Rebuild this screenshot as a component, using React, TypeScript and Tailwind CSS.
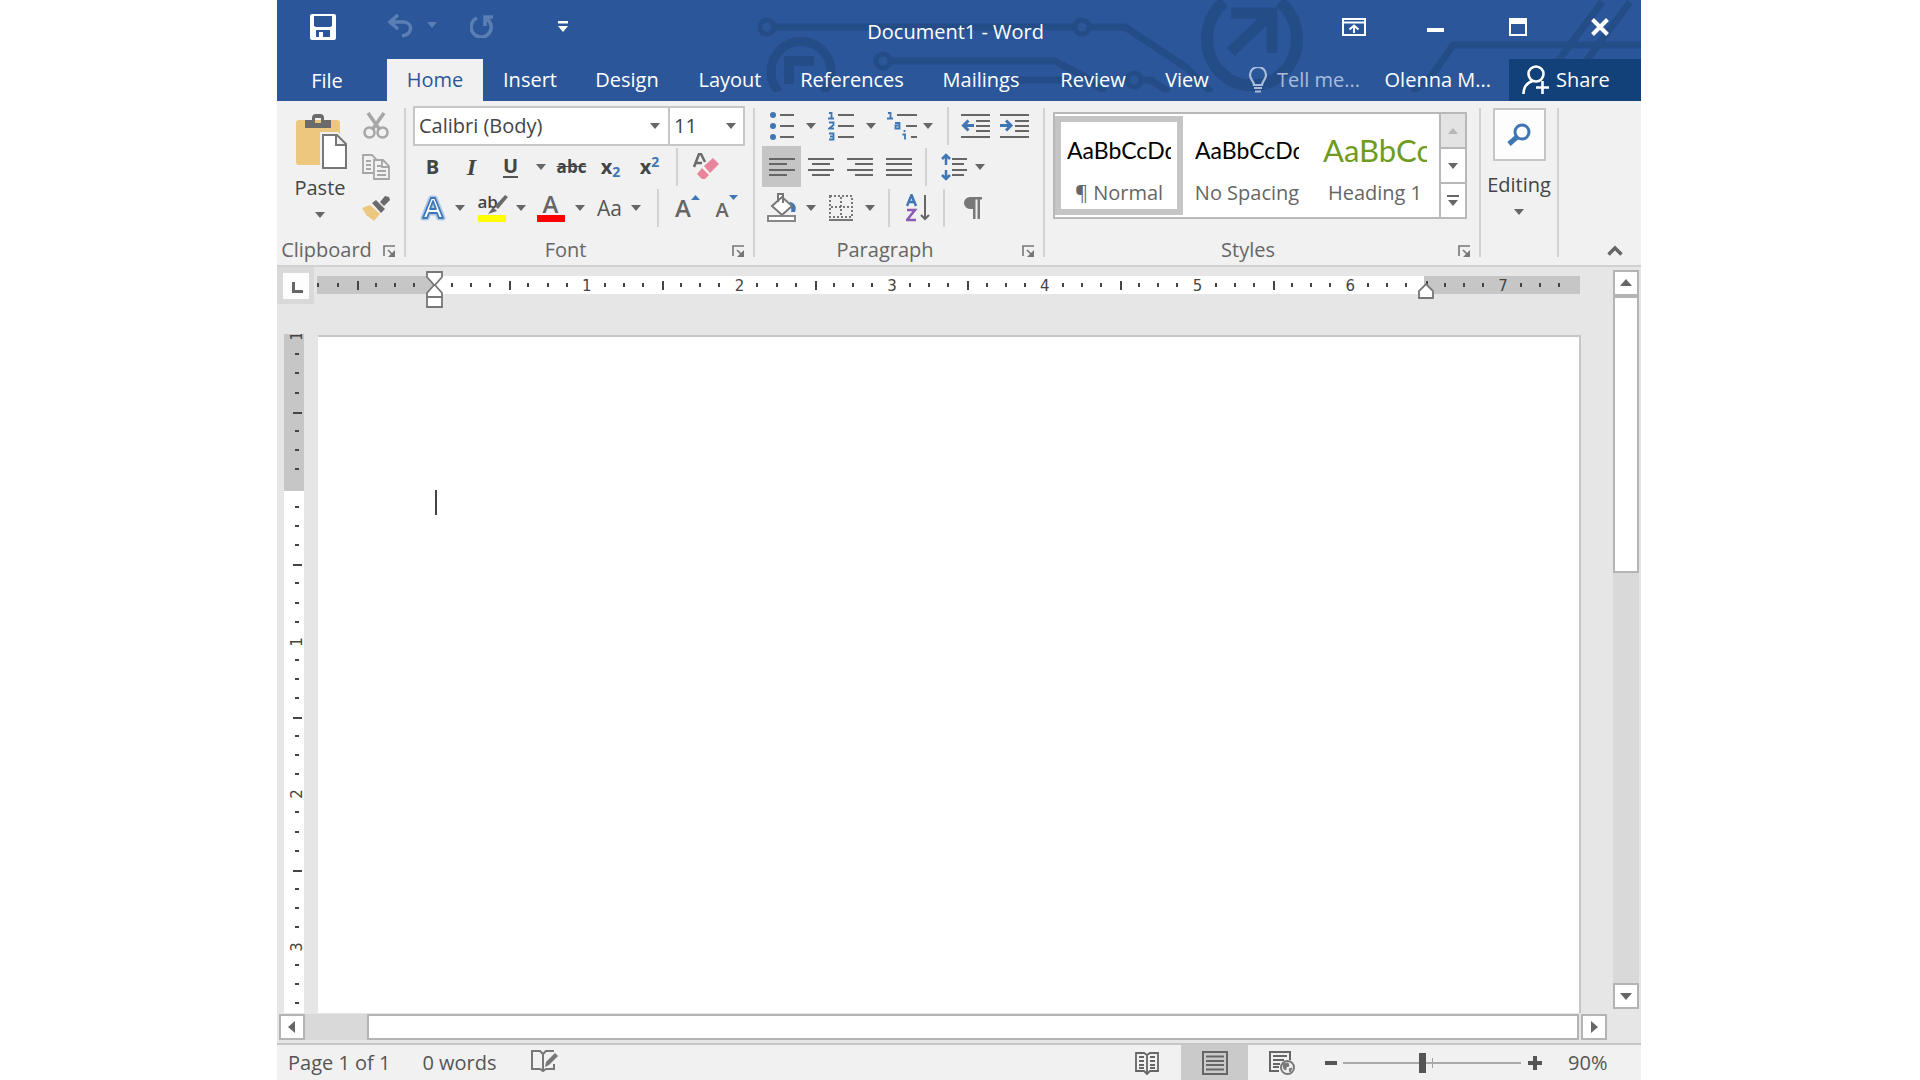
import React, { useState } from 'react';

interface TabItem {
  name: string;
  width: string;
}

interface ToolProps {
  label: string;
  width?: string;
  active?: boolean;
  children: React.ReactNode;
}

interface GroupProps {
  title: string;
  className: string;
  children: React.ReactNode;
}

const tabsData: TabItem[] = [
  { name: 'Home', width: 'w-24' },
  { name: 'Insert', width: 'w-[94px]' },
  { name: 'Design', width: 'w-[100px]' },
  { name: 'Layout', width: 'w-[106px]' },
  { name: 'References', width: 'w-[138px]' },
  { name: 'Mailings', width: 'w-[120px]' },
  { name: 'Review', width: 'w-[104px]' },
  { name: 'View', width: 'w-[84px]' },
];

const stylesData = [
  { name: '¶ Normal', sample: 'AaBbCcDd', css: 'text-[23px] text-black' },
  { name: 'No Spacing', sample: 'AaBbCcDd', css: 'text-[23px] text-black' },
  { name: 'Heading 1', sample: 'AaBbCcDd', css: 'text-[31px] text-[#6f9c20]' },
];

const INCH = 152.7;

const Caret = ({ className = 'fill-[#666]' }: { className?: string }) => (
  <svg width="10" height="6" viewBox="0 0 10 6" className={className}>
    <path d="M0 0h10L5 6z" />
  </svg>
);

const Tool = ({ label, width = 'w-[39px]', active = false, children }: ToolProps) => (
  <button type="button" aria-label={label} title={label} className={`flex h-[41px] shrink-0 items-center justify-center ${width} ${active ? 'bg-[#c5c5c5]' : ''}`}>
    {children}
  </button>
);

const CaretTool = ({ label, width = 'w-5' }: { label: string; width?: string }) => (
  <Tool label={label} width={width}>
    <Caret />
  </Tool>
);

const Separator = ({ className }: { className: string }) => <div className={`h-[38px] w-0.5 shrink-0 bg-[#d2d2d2] ${className}`} />;

const Group = ({ title, className, children }: GroupProps) => (
  <section aria-label={title} className={`flex shrink-0 flex-col ${className}`}>
    <div className="h-[130px]">{children}</div>
    <div className="flex h-[30px] items-center">
      <span className="flex-1 text-center text-[#666]">{title}</span>
      <button type="button" aria-label={`${title} settings`} className="mr-[2px] flex w-[26px] justify-center pt-0.5">
        <svg width="13" height="13" viewBox="0 0 13 13" fill="none" stroke="#777" strokeWidth="1.6">
          <path d="M1 11V1h11M5 5l5 5" />
          <path d="M12 5v7H5z" fill="#777" stroke="none" />
        </svg>
      </button>
    </div>
  </section>
);

const Divider = () => <div className="mt-[3px] h-[149px] w-0.5 shrink-0 bg-[#d2d2d2]" />;

/* Circuit pattern behind the title */
const Circuit = () => (
  <svg width="901" height="92" viewBox="740 0 901 92" className="pointer-events-none absolute top-0 right-0" fill="none" stroke="#244c86" strokeWidth="7">
    <circle cx="767" cy="27" r="7" strokeWidth="5" />
    <path d="M774 27h301M1089 27h36l62 41 24 24" />
    <circle cx="1082" cy="27" r="7" strokeWidth="5" />
    <circle cx="883" cy="61" r="7" strokeWidth="5" />
    <path d="M890 61h165l30 16 20 15" />
    <path d="M1010 80h50l18 6M1141 80h10l18 12" />
    <circle cx="1134" cy="80" r="7" strokeWidth="5" />
    <path d="M779 92a30 30 0 1 1 44 0" strokeWidth="9" />
    <path d="M789 84V61h25" strokeWidth="10" />
    <path d="M1224 2a49 49 0 0 0-6 68l12 10a49 49 0 0 0 44 0l12-10a49 49 0 0 0-6-68" strokeWidth="12" />
    <path d="M1231 13h41v40M1231 52l40-39" strokeWidth="11" />
    <path d="M1412 92l18-14 23-33h188M1556 64l46-62M1584 64l46-62" />
  </svg>
);

const TitleBar = () => (
  <div className="relative flex h-[59px] items-start pt-[14px]">
    <button type="button" aria-label="Save" className="ml-[33px] w-[26px]">
      <svg width="26" height="26" viewBox="0 0 26 26">
        <path d="M2 0h22a2 2 0 0 1 2 2v22a2 2 0 0 1-2 2H2a2 2 0 0 1-2-2V2a2 2 0 0 1 2-2zM4 2v10l2 1h14l2-1V2zM6 16v7h3v-5h4v5h7v-7z" fill="#fff" fillRule="evenodd" />
      </svg>
    </button>
    <button type="button" aria-label="Undo" className="ml-[51px]">
      <svg width="26" height="24" viewBox="0 0 26 24" fill="none" stroke="#5b7fb5" strokeWidth="3.5">
        <path d="M11 1L3 8l8 7M3 8h14c9 1 9 12-2 14" />
      </svg>
    </button>
    <button type="button" aria-label="Undo list" className="ml-[14px] pt-2">
      <Caret className="fill-[#5b7fb5]" />
    </button>
    <button type="button" aria-label="Redo" className="ml-[33px]">
      <svg width="24" height="24" viewBox="0 0 24 24" fill="none" stroke="#5b7fb5" strokeWidth="3.5">
        <path d="M7 4a10 10 0 1 0 10 1M15 12V3h8" />
      </svg>
    </button>
    <button type="button" aria-label="Customize toolbar" className="ml-[64px] pt-[7px]">
      <svg width="10" height="12" viewBox="0 0 10 12" fill="#fff">
        <path d="M0 0h10v2.500H0zM0 5h10l-5 6z" />
      </svg>
    </button>
    <h1 className="mr-[298px] ml-auto pt-[6px] text-white">Document1 - Word</h1>
    <div className="mr-[32px] flex h-[26px] items-center text-white">
      <button type="button" aria-label="Ribbon display options" className="mr-[61px]">
        <svg width="24" height="18" viewBox="0 0 24 18" fill="none" stroke="#fff" strokeWidth="2">
          <path d="M1 1h22v16H1zM1 4.500h22M12 15V8M7.500 11.500L12 7.500l4.500 4" />
        </svg>
      </button>
      <button type="button" aria-label="Minimize" className="mr-[65px] pt-[6px]">
        <svg width="17" height="4" viewBox="0 0 17 4">
          <path d="M0 0h17v4H0z" fill="#fff" />
        </svg>
      </button>
      <button type="button" aria-label="Maximize" className="mr-[64px]">
        <svg width="18" height="18" viewBox="0 0 18 18">
          <path d="M0 0h18v18H0zM2 6v10h14V6z" fill="#fff" fillRule="evenodd" />
        </svg>
      </button>
      <button type="button" aria-label="Close">
        <svg width="18" height="18" viewBox="0 0 18 18" stroke="#fff" strokeWidth="4">
          <path d="M1.500 1.500l15 15M16.500 1.500l-15 15" />
        </svg>
      </button>
    </div>
  </div>
);

const TabBar = ({ tab, setTab }: { tab: string; setTab: (name: string) => void }) => (
  <nav className="relative flex h-[42px] text-white">
    <button type="button" className="mr-[10px] w-[100px] pt-0.5">
      File
    </button>
    {tabsData.map((item) => (
      <button key={item.name} type="button" onClick={() => setTab(item.name)} className={`shrink-0 ${item.width} ${tab === item.name ? 'bg-[#f1f1f1] text-[#2b579a]' : ''}`}>
        {item.name}
      </button>
    ))}
    <button type="button" className="ml-[19px] flex items-center gap-[9px] text-[#a9bddb]">
      <svg width="20" height="26" viewBox="0 0 20 26" fill="none" stroke="#a9bddb" strokeWidth="2.200">
        <path d="M6 18c0-4-4-5-4-10a8 8 0 0 1 16 0c0 5-4 6-4 10zM6 21h8M7 24.500h6" />
      </svg>
      Tell me...
    </button>
    <button type="button" className="mr-[18px] ml-auto">
      Olenna M...
    </button>
    <button type="button" className="flex w-[132px] items-center gap-[6px] bg-[#124078] pl-[13px]">
      <svg width="28" height="30" viewBox="0 0 28 30" fill="none" stroke="#fff" strokeWidth="2.600">
        <circle cx="14" cy="9" r="7.500" />
        <path d="M1.500 29c0-7 3-11 9-13M14 22.500h13M20.500 16v13" />
      </svg>
      Share
    </button>
  </nav>
);

const ClipboardGroup = () => (
  <Group title="Clipboard" className="w-[127px]">
    <div className="flex">
      <button type="button" className="ml-[16px] flex w-[54px] flex-col items-center pt-[9px] text-[#444]">
        <svg width="52" height="55" viewBox="0 0 52 55" className="ml-1">
          <path d="M3 6h38a3 3 0 0 1 3 3v42H3a3 3 0 0 1-3-3V9a3 3 0 0 1 3-3z" fill="#edc77d" />
          <path d="M9 6h7V4a4 4 0 0 1 4-4h4a4 4 0 0 1 4 4v2h7v8H9zM19 4h6v5h-6z" fill="#6b6b6b" fillRule="evenodd" />
          <path d="M24 18h18l9 10v27H24z" fill="#f1f1f1" />
          <path d="M27 21h14l9 9v24H27zM40 21v10h10" fill="#fff" stroke="#777" strokeWidth="2" />
        </svg>
        <span className="mt-[5px] leading-7">Paste</span>
        <span className="mt-[10px]">
          <Caret />
        </span>
      </button>
      <div className="ml-[8px]">
        <Tool label="Cut" width="w-[42px]">
          <svg width="26" height="27" viewBox="0 0 26 27" fill="none" stroke="#a6a6a6" strokeWidth="2.500">
            <path d="M5 1l12 17M21 1L9 18" strokeWidth="3.500" />
            <circle cx="6.500" cy="20.500" r="5" />
            <circle cx="19.500" cy="20.500" r="5" />
          </svg>
        </Tool>
        <Tool label="Copy" width="w-[42px]">
          <svg width="28" height="26" viewBox="0 0 28 26" fill="#f1f1f1" stroke="#a6a6a6" strokeWidth="1.800">
            <path d="M1 1h9l5 5v13H1zM4 7h5M4 11h5M4 15h5" />
            <path d="M12 6h9l6 6v13H12zM20 6v7h7M15 12h4M15 17h9M15 21h9" />
          </svg>
        </Tool>
        <Tool label="Format Painter" width="w-[42px]">
          <svg width="28" height="26" viewBox="0 0 28 26">
            <path d="M0 13l8-3 10 9-6 7-5-4-2-1z" fill="#edc77d" />
            <path d="M10 8l4-3 9 9-4 4zM18 7l5-6 4 1 1 3-6 6z" fill="#6b6b6b" />
          </svg>
        </Tool>
      </div>
    </div>
  </Group>
);

const FontGroup = () => (
  <Group title="Font" className="w-[347px] text-[#444]">
    <div className="flex h-[41px] items-end pl-[7px]">
      <div className="relative">
        <select aria-label="Font name" className="block h-10 w-[257px] appearance-none border-2 border-[#c6c6c6] bg-white pl-1 text-[#444]">
          <option>Calibri (Body)</option>
        </select>
        <span className="pointer-events-none absolute top-[17px] right-[10px]">
          <Caret />
        </span>
      </div>
      <div className="relative -ml-0.5">
        <select aria-label="Font size" className="block h-10 w-[77px] appearance-none border-2 border-[#c6c6c6] bg-white pl-1 text-[#444]">
          <option>11</option>
        </select>
        <span className="pointer-events-none absolute top-[17px] right-[9px]">
          <Caret />
        </span>
      </div>
    </div>
    <div className="flex items-center pl-[7px]">
      <Tool label="Bold">
        <span className="font-bold">B</span>
      </Tool>
      <Tool label="Italic">
        <span className="font-['Liberation_Serif',serif] text-2xl font-bold italic">I</span>
      </Tool>
      <Tool label="Underline">
        <span className="border-b-2 border-[#555] leading-5 font-bold">U</span>
      </Tool>
      <CaretTool label="Underline style" width="w-[22px]" />
      <Tool label="Strikethrough">
        <span className="text-[17px] font-bold line-through">abc</span>
      </Tool>
      <Tool label="Subscript">
        <span className="font-bold">
          x<sub className="text-sm text-[#3f76b4]">2</sub>
        </span>
      </Tool>
      <Tool label="Superscript">
        <span className="font-bold">
          x<sup className="text-sm text-[#3f76b4]">2</sup>
        </span>
      </Tool>
      <Separator className="mr-2 ml-[7px]" />
      <Tool label="Clear formatting">
        <svg width="26" height="27" viewBox="0 0 26 27">
          <path d="M1 14L6 1h2l4 8M3 10h6" fill="none" stroke="#6b6b6b" strokeWidth="2.500" />
          <path d="M11 13l9-8 6 6-9 9zM9 15l7 7-4 4H9l-5-5z" fill="#e8849b" />
        </svg>
      </Tool>
    </div>
    <div className="flex items-center pl-[7px]">
      <Tool label="Text effects">
        <svg width="26" height="26" viewBox="0 0 26 26" strokeLinejoin="round">
          <path d="M3 23L11 3h4l8 20h-4l-2-5H9l-2 5zM10 14h6l-3-8z" fill="#fff" stroke="#a9c8e8" strokeWidth="5" />
          <path d="M3 23L11 3h4l8 20h-4l-2-5H9l-2 5zM10 14h6l-3-8z" fill="#fff" stroke="#3f76b4" strokeWidth="1.800" />
        </svg>
      </Tool>
      <CaretTool label="Text effects list" width="w-4" />
      <div className="ml-1 flex">
        <Tool label="Text highlight color">
          <span className="relative flex h-7 w-7 flex-col items-start border-b-[7px] border-[#ffff00] text-[17px] leading-4 font-semibold">
            ab
            <svg width="22" height="20" viewBox="0 0 22 20" className="absolute top-0 -right-0.5">
              <path d="M9 12L19 1l3 2-10 12zM7 13l4 4-9 3z" fill="#6b6b6b" />
            </svg>
          </span>
        </Tool>
        <CaretTool label="Highlight color list" />
      </div>
      <Tool label="Font color">
        <span className="flex h-7 w-7 flex-col items-center border-b-[7px] border-[#ff0000] text-2xl leading-5 font-semibold text-[#666]">A</span>
      </Tool>
      <CaretTool label="Font color list" />
      <Tool label="Change case">
        <span className="text-[21px] text-[#555]">Aa</span>
      </Tool>
      <CaretTool label="Change case list" width="w-[14px]" />
      <Separator className="mr-[9px] ml-[14px]" />
      <Tool label="Grow font">
        <span className="text-2xl font-semibold text-[#666]">A</span>
        <svg width="9" height="5" viewBox="0 0 9 5" className="mb-5">
          <path d="M0 5h9L4.500 0z" fill="#3f76b4" />
        </svg>
      </Tool>
      <Tool label="Shrink font">
        <span className="pt-1 font-semibold text-[#666]">A</span>
        <svg width="9" height="5" viewBox="0 0 9 5" className="mb-5">
          <path d="M0 0h9L4.500 5z" fill="#3f76b4" />
        </svg>
      </Tool>
    </div>
  </Group>
);

const AlignIcon = ({ d }: { d: string }) => (
  <svg width="26" height="20" viewBox="0 0 26 20" stroke="#666" strokeWidth="2">
    <path d={d} />
  </svg>
);

const ParagraphGroup = () => (
  <Group title="Paragraph" className="w-[288px]">
    <div className="flex items-center pl-[7px]">
      <Tool label="Bullets">
        <svg width="24" height="28" viewBox="0 0 24 28">
          <path d="M10 3h14M10 14h14M10 25h14" stroke="#666" strokeWidth="2" />
          <circle cx="3" cy="3" r="3" fill="#3f76b4" />
          <circle cx="3" cy="14" r="3" fill="#3f76b4" />
          <circle cx="3" cy="25" r="3" fill="#3f76b4" />
        </svg>
      </Tool>
      <CaretTool label="Bullet library" />
      <Tool label="Numbering">
        <svg width="26" height="30" viewBox="0 0 26 30">
          <path d="M10 4h16M10 15h16M10 26h16" stroke="#666" strokeWidth="2" />
          <path d="M1 2h2.500v5M0 7.500h6M1 11.500h4.500v2.500L1 17.500h5M1 22.500h4.500v6H1M2 25.500h3" fill="none" stroke="#3f76b4" strokeWidth="1.800" />
        </svg>
      </Tool>
      <CaretTool label="Numbering library" width="w-[22px]" />
      <Tool label="Multilevel list">
        <svg width="30" height="30" viewBox="0 0 30 30">
          <path d="M10 4h20M19 15h11M24 26h6" stroke="#666" strokeWidth="2" />
          <path d="M1 2h2.500v5M0 7.500h6M8 12h4.500v5.500H8.500v-3h4M17.500 19v2M15.500 23.500h2.500v5" fill="none" stroke="#3f76b4" strokeWidth="1.800" />
        </svg>
      </Tool>
      <CaretTool label="List library" width="w-[14px]" />
      <Separator className="mr-[7px] ml-[12px]" />
      <Tool label="Decrease indent">
        <svg width="29" height="26" viewBox="0 0 29 26" fill="none" stroke="#666" strokeWidth="2">
          <path d="M0 2h29M15 8h14M15 13h14M15 18h14M0 24h29" />
          <path d="M13 12.500H3M7.500 7.500l-5 5 5 5" stroke="#3f76b4" strokeWidth="3" />
        </svg>
      </Tool>
      <Tool label="Increase indent">
        <svg width="29" height="26" viewBox="0 0 29 26" fill="none" stroke="#666" strokeWidth="2">
          <path d="M0 2h29M15 8h14M15 13h14M15 18h14M0 24h29" />
          <path d="M0 12.500h10M6 7.500l5 5-5 5" stroke="#3f76b4" strokeWidth="3" />
        </svg>
      </Tool>
    </div>
    <div className="flex items-center pl-[7px]">
      <Tool label="Align left" active>
        <AlignIcon d="M0 2h26M0 7h18M0 13h26M0 18h18" />
      </Tool>
      <Tool label="Center">
        <AlignIcon d="M0 2h26M4 7h18M0 13h26M4 18h18" />
      </Tool>
      <Tool label="Align right">
        <AlignIcon d="M0 2h26M8 7h18M0 13h26M8 18h18" />
      </Tool>
      <Tool label="Justify">
        <AlignIcon d="M0 2h26M0 7h26M0 13h26M0 18h26" />
      </Tool>
      <Separator className="mx-[7px]" />
      <Tool label="Line spacing">
        <svg width="26" height="28" viewBox="0 0 26 28" fill="none" stroke="#666" strokeWidth="2">
          <path d="M11 6h15M11 11h12M11 17h15M11 22h12" />
          <path d="M5 12V2M1 6l4-4 4 4M5 17v9M1 22l4 4 4-4" stroke="#3f76b4" strokeWidth="2.500" />
        </svg>
      </Tool>
      <CaretTool label="Line spacing list" width="w-[14px]" />
    </div>
    <div className="flex items-center pl-[7px]">
      <Tool label="Shading">
        <svg width="30" height="29" viewBox="0 0 30 29">
          <path d="M23 9c5 1 7 5 5 10h-4c1-3 0-5-2-7z" fill="#3f76b4" />
          <path d="M5 13L15 4l10 9-10 9zM11 9V1h5v9" fill="#fff" stroke="#777" strokeWidth="2" />
          <path d="M1 23h27v5H1z" fill="#fff" stroke="#888" strokeWidth="2" />
        </svg>
      </Tool>
      <CaretTool label="Shading list" />
      <Tool label="Borders">
        <svg width="24" height="26" viewBox="0 0 24 26" fill="none" stroke="#777" strokeWidth="2">
          <path d="M1 1h22v21H1zM12 2v20M2 12h20" strokeDasharray="2 2" />
          <path d="M0 25h24" />
        </svg>
      </Tool>
      <CaretTool label="Borders list" />
      <Separator className="mr-[9px] ml-[8px]" />
      <Tool label="Sort">
        <svg width="25" height="28" viewBox="0 0 25 28" fill="none" strokeWidth="2.500">
          <path d="M1 12L5.500 1 10 12M3 8h5" stroke="#3f76b4" />
          <path d="M1 16h8L1 26h9" stroke="#8a5cb5" />
          <path d="M19 1v24M15 21l4 4 4-4" stroke="#666" strokeWidth="2" />
        </svg>
      </Tool>
      <Separator className="mr-[8px] ml-[5px]" />
      <Tool label="Show formatting marks">
        <svg width="18" height="22" viewBox="0 0 18 22">
          <path d="M6 0h12v2.500h-2V22h-2.500V2.500h-2V22H9V12H6A6 6 0 0 1 6 0z" fill="#777" />
        </svg>
      </Tool>
    </div>
  </Group>
);

const StylesGroup = () => {
  const [style, setStyle] = useState('¶ Normal');

  return (
    <Group title="Styles" className="w-[434px]">
      <div className="mt-[7px] ml-[8px] flex h-[107px] w-[414px] border-2 border-[#b8b8b8] bg-white">
        <div className="flex flex-1 overflow-hidden py-0.5">
          {stylesData.map((item) => (
            <button
              key={item.name}
              type="button"
              onClick={() => setStyle(item.name)}
              className={`flex w-32 shrink-0 flex-col border-[6px] px-[6px] pt-[12px] ${style === item.name ? 'border-[#c5c5c5]' : 'border-transparent'}`}
            >
              <span className={`flex h-8 w-[104px] items-center overflow-hidden font-['Lato',sans-serif] leading-8 ${item.css}`}>{item.sample}</span>
              <span className="mt-[15px] self-center leading-6 whitespace-nowrap text-[#666]">{item.name}</span>
            </button>
          ))}
        </div>
        <div className="flex w-[26px] shrink-0 flex-col divide-y-2 divide-[#b8b8b8] border-l-2 border-[#b8b8b8]">
          <button type="button" aria-label="Previous styles" className="flex flex-1 items-center justify-center bg-[#e3e3e3]">
            <svg width="10" height="6" viewBox="0 0 10 6">
              <path d="M0 6h10L5 0z" fill="#b8b8b8" />
            </svg>
          </button>
          <button type="button" aria-label="Next styles" className="flex flex-1 items-center justify-center">
            <Caret />
          </button>
          <button type="button" aria-label="More styles" className="flex flex-1 items-center justify-center">
            <svg width="12" height="11" viewBox="0 0 12 11" fill="#666">
              <path d="M0 0h12v2H0zM1 5h10l-5 6z" />
            </svg>
          </button>
        </div>
      </div>
    </Group>
  );
};

const Ribbon = () => (
  <div className="flex h-[166px] border-b-2 border-[#d2d2d2] bg-[#f1f1f1] pt-1">
    <ClipboardGroup />
    <Divider />
    <FontGroup />
    <Divider />
    <ParagraphGroup />
    <Divider />
    <StylesGroup />
    <Divider />
    <button type="button" className="flex w-[76px] shrink-0 flex-col items-center pt-[3px] text-[#444]">
      <span className="flex h-[53px] w-[53px] items-center justify-center border-2 border-[#c6c6c6] bg-[#fdfdfd]">
        <svg width="24" height="24" viewBox="0 0 24 24" fill="none" stroke="#3f76b4">
          <circle cx="15" cy="9" r="7" strokeWidth="3" />
          <path d="M10 14l-8 7" strokeWidth="5" />
        </svg>
      </span>
      <span className="mt-[10px] leading-7">Editing</span>
      <span className="mt-[10px]">
        <Caret />
      </span>
    </button>
    <Divider />
    <button type="button" aria-label="Collapse ribbon" className="mt-auto mr-[18px] mb-[9px] ml-auto">
      <svg width="16" height="11" viewBox="0 0 16 11" fill="none" stroke="#666" strokeWidth="3.500">
        <path d="M1.500 9.500L8 3l6.500 6.500" />
      </svg>
    </button>
  </div>
);

const ticks = (from: number, to: number) => Array.from({ length: to - from + 1 }, (_, i) => from + i);

/* Origin sits 117px from the left edge of the ruler */
const HorizontalRuler = () => (
  <div className="relative mr-[33px] ml-[3px] h-[42px] flex-1">
    <div className="flex h-[27px] pt-[9px]">
      <div className="w-[117px] bg-[#c6c6c6]" />
      <div className="w-[990px] bg-white" />
      <div className="flex-1 bg-[#c6c6c6]" />
    </div>
    <svg width="100%" height="42" className="absolute top-0 left-0 font-['DejaVu_Sans',sans-serif]" fill="#444">
      {ticks(-6, 60)
        .filter((n) => n !== 0 && n * (INCH / 8) < 1140)
        .map((n) => {
          const x = 117 + (n * INCH) / 8;
          if (n % 8 === 0) {
            return (
              <text key={n} x={x} y="24" textAnchor="middle" fontSize="15">
                {n / 8}
              </text>
            );
          }
          return n % 4 === 0 ? <rect key={n} x={Math.round(x) - 1} y="14" width="2" height="9" /> : <rect key={n} x={Math.round(x) - 2} y="16" width="2" height="4" />;
        })}
      <path d="M110 5h15v5l-7 8 7 8v14h-15V26l7-8-7-8zM110 30h15" fill="#fff" stroke="#777" strokeWidth="1.800" />
      <path d="M1109 17l7 7v7h-14v-7z" fill="#fff" stroke="#777" strokeWidth="1.800" />
    </svg>
  </div>
);

const VerticalRuler = () => (
  <div className="relative mr-[14px] ml-[7px] w-5 shrink-0 overflow-hidden bg-white">
    <div className="h-[157px] bg-[#c6c6c6]" />
    <svg width="20" height="100%" className="absolute top-0 left-0 font-['DejaVu_Sans',sans-serif]" fill="#444">
      {ticks(-8, 27)
        .filter((n) => n !== 0)
        .map((n) => {
          const y = Math.round(155 + (n * INCH) / 8);
          if (n % 8 === 0) {
            return (
              <text key={n} x="0" y="0" textAnchor="middle" fontSize="15" transform={`translate(18 ${y}) rotate(-90)`}>
                {Math.abs(n / 8)}
              </text>
            );
          }
          return n % 4 === 0 ? <rect key={n} x="9" y={y - 1} width="9" height="2" /> : <rect key={n} x="11" y={y - 2} width="4" height="2" />;
        })}
    </svg>
  </div>
);

const ScrollButton = ({ label, d }: { label: string; d: string }) => (
  <button type="button" aria-label={label} className="flex h-[26px] w-[26px] shrink-0 items-center justify-center border-2 border-[#b4b4b4] bg-white">
    <svg width="12" height="12" viewBox="0 0 12 12" fill="#666">
      <path d={d} />
    </svg>
  </button>
);

const Workspace = () => (
  <div className="flex flex-1 bg-[#e6e6e6]">
    <div className="flex min-w-0 flex-1 flex-col">
      <div className="flex">
        <div className="flex h-[37px] w-[37px] shrink-0 items-center justify-center bg-[#d9d9d9]">
          <button type="button" aria-label="Tab selector" className="flex h-[26px] w-[26px] items-center justify-center bg-[#fdfdfd] pt-1 pl-1">
            <svg width="11" height="11" viewBox="0 0 11 11" fill="none" stroke="#666" strokeWidth="3">
              <path d="M1.500 0v9.500H11" />
            </svg>
          </button>
        </div>
        <HorizontalRuler />
      </div>
      <div className="mt-[25px] mr-[32px] flex flex-1">
        <VerticalRuler />
        <main className="mt-px flex-1 border-t-2 border-r-2 border-[#c6c6c6] bg-white pt-[153px] pl-[117px]">
          <div className="h-[25px] w-0.5 bg-[#444]" />
        </main>
      </div>
      <div className="flex h-[30px] items-start bg-[#e6e6e6] pt-px pl-[2px]">
        <ScrollButton label="Scroll left" d="M9 0v12L2 6z" />
        <div className="flex flex-1 bg-[#d9d9d9] pl-[62px]">
          <div className="h-[26px] flex-1 border-2 border-[#b4b4b4] bg-white" />
        </div>
        <div className="mr-[6px] ml-[2px]">
          <ScrollButton label="Scroll right" d="M3 0v12l7-6z" />
        </div>
      </div>
    </div>
    <div className="mt-[3px] mr-[2px] mb-[34px] flex w-[26px] shrink-0 flex-col bg-[#d9d9d9]">
      <ScrollButton label="Scroll up" d="M0 9h12L6 2z" />
      <div className="h-[277px] border-2 border-[#b4b4b4] bg-white" />
      <div className="mt-auto">
        <ScrollButton label="Scroll down" d="M0 3h12L6 10z" />
      </div>
    </div>
  </div>
);

const StatusBar = () => {
  const [zoom, setZoom] = useState(90);

  return (
    <footer className="flex h-[37px] items-center border-t-2 border-[#c6c6c6] bg-[#f1f1f1] pl-[11px] text-[#555]">
      <span>Page 1 of 1</span>
      <span className="ml-8">0 words</span>
      <button type="button" aria-label="Proofing" className="mb-1 ml-[34px]">
        <svg width="28" height="24" viewBox="0 0 28 24" fill="none" stroke="#777" strokeWidth="2">
          <path d="M12 22V5L9 2H1v18h8l3 2 3-2h8v-5M12 5l3-3h8" />
          <path d="M14 18l1-5 9-9 3 3-9 9z" fill="#777" stroke="none" />
        </svg>
      </button>
      <div className="ml-auto flex h-full items-center">
        <button type="button" aria-label="Read mode" className="mr-[22px]">
          <svg width="24" height="24" viewBox="0 0 24 24" fill="none" stroke="#666" strokeWidth="1.800">
            <path d="M12 23l-3-3H1V2h8l3 2 3-2h8v18h-8zM12 4v18M4 6h5M4 10h5M4 14h5M4 17h5M15 6h5M15 10h5M15 14h5M15 17h5" />
          </svg>
        </button>
        <button type="button" aria-label="Print layout" className="flex h-full w-[67px] items-center justify-center bg-[#cacaca]">
          <svg width="26" height="24" viewBox="0 0 26 24" fill="none" stroke="#666" strokeWidth="2">
            <path d="M1 1h24v22H1zM4 5.500h18M4 10h18M4 14h18M4 18.500h18" />
          </svg>
        </button>
        <button type="button" aria-label="Web layout" className="ml-[21px]">
          <svg width="26" height="24" viewBox="0 0 26 24" fill="none" stroke="#666" strokeWidth="2">
            <path d="M10 20H1V1h20v8M4 5h14M4 9h11M4 13h7M4 16h6" />
            <circle cx="18.500" cy="16.500" r="6.500" fill="#f1f1f1" stroke="#777" />
            <path d="M14 13l5-1 1 3-3 1v3l-2-1zM20 18l3-1-2 4z" fill="#777" stroke="#777" strokeWidth="1" />
          </svg>
        </button>
        <button type="button" aria-label="Zoom out" className="ml-[30px]">
          <svg width="12" height="4" viewBox="0 0 12 4">
            <path d="M0 0h12v4H0z" fill="#555" />
          </svg>
        </button>
        <div className="relative ml-[6px] flex w-[178px] items-center">
          <span className="absolute left-1/2 h-[10px] w-px bg-[#a0a0a0]" />
          <input
            type="range"
            aria-label="Zoom"
            min={10}
            max={190}
            value={zoom}
            onChange={(e) => setZoom(Number(e.target.value))}
            className="relative m-0 h-5 w-full appearance-none bg-transparent [&::-webkit-slider-runnable-track]:h-0.5 [&::-webkit-slider-runnable-track]:bg-[#a8a8a8] [&::-webkit-slider-thumb]:-mt-[9px] [&::-webkit-slider-thumb]:h-5 [&::-webkit-slider-thumb]:w-[7px] [&::-webkit-slider-thumb]:appearance-none [&::-webkit-slider-thumb]:bg-[#555]"
          />
        </div>
        <button type="button" aria-label="Zoom in" className="ml-[7px]">
          <svg width="14" height="14" viewBox="0 0 14 14" stroke="#555" strokeWidth="4">
            <path d="M0 7h14M7 0v14" />
          </svg>
        </button>
        <span className="ml-[26px] w-[73px]">{zoom}%</span>
      </div>
    </footer>
  );
};

const App = () => {
  const [tab, setTab] = useState('Home');

  return (
    <div className="flex min-h-screen bg-white pr-[279px] pl-[277px] font-['Open_Sans','Noto_Sans',sans-serif] text-[20px] leading-6">
      <div className="flex min-w-0 flex-1 flex-col">
        <header className="relative bg-[#2b579a]">
          <Circuit />
          <TitleBar />
          <TabBar tab={tab} setTab={setTab} />
        </header>
        <Ribbon />
        <Workspace />
        <StatusBar />
      </div>
    </div>
  );
};

export default App;
